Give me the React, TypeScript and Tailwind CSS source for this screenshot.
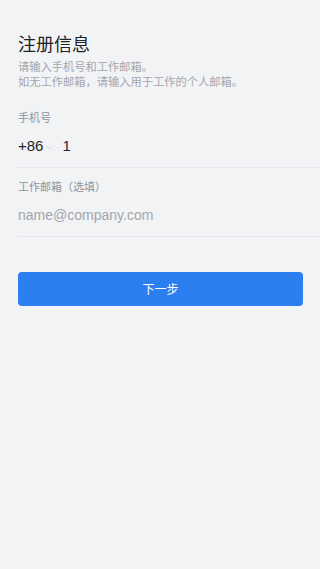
import { ChevronDown } from "lucide-react";

const font = { fontFamily: '"Noto Sans CJK SC", "Noto Sans", sans-serif' };
const latin = { fontFamily: '"Liberation Sans", sans-serif' };

export default function App() {
  return (
    <div className="min-h-[569px] w-full bg-[#f2f3f5]" style={font}>
      <div className="pl-[18px] pt-[30px]">
        <h1 className="text-[18px] leading-[26px] font-normal text-[#1f2329]">注册信息</h1>
        <p className="mt-[3px] pr-[10px] text-[11.25px] leading-[15px] text-[#a3a6ad]">
          请输入手机号和工作邮箱。
          <br />
          如无工作邮箱，请输入用于工作的个人邮箱。
        </p>

        <div className="mt-[20px]">
          <div className="text-[11px] leading-[16px] text-[#8f959e]">手机号</div>
          <div className="flex h-[43px] items-center border-b border-[#e6e7ea]">
            <span className="text-[15px] text-[#1f2329]" style={latin}>
              +86
            </span>
            <ChevronDown size={11} strokeWidth={1.5} className="ml-[1px] mt-[2px] text-[#c0c4cc]" />
            <span className="ml-[7px] text-[15px] text-[#1f2329]" style={latin}>
              1
            </span>
          </div>
        </div>

        <div className="mt-[10px]">
          <div className="text-[11px] leading-[16px] text-[#8f959e]">工作邮箱（选填）</div>
          <div className="flex h-[43px] items-center border-b border-[#e6e7ea]">
            <span className="text-[14px] text-[#a3a6ad]" style={latin}>
              name@company.com
            </span>
          </div>
        </div>

        <button className="mt-[35px] flex h-[34px] w-[285px] items-center justify-center rounded-[4px] bg-[#2b7ff0] text-[12px] text-white">
          下一步
        </button>
      </div>
    </div>
  );
}
